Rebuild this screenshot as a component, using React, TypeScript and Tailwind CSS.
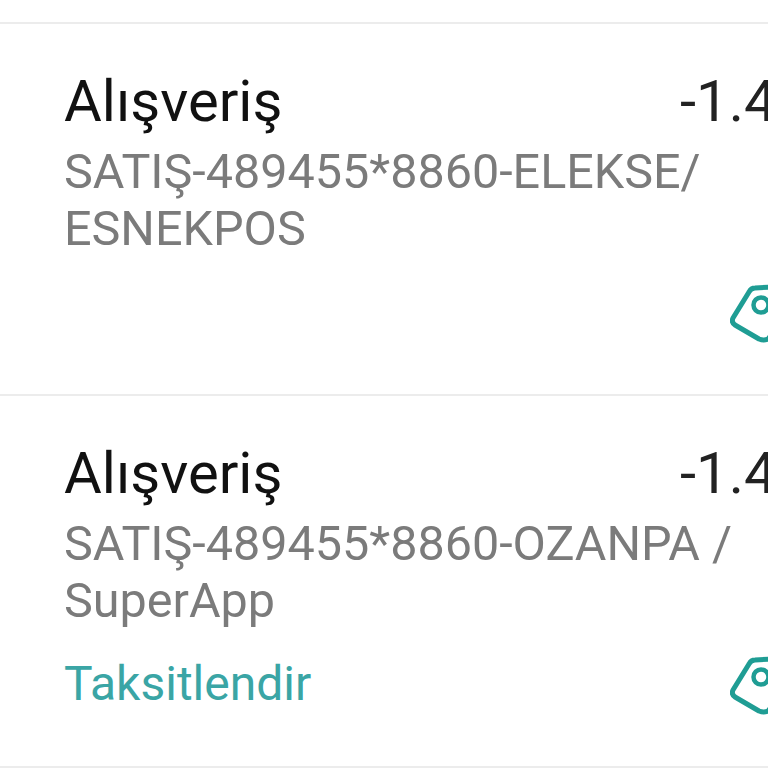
const TagIcon = () => (
  <svg className="h-[62px] w-[62px] shrink-0" viewBox="0 0 62 62" fill="none" stroke="#1f9d94" strokeWidth="5" strokeLinejoin="round" aria-hidden="true">
    <path d="M3 34 Q1 38 5 41 L29 55 Q34 57 38 55 L58 30 L55 2 L25 4 Q21 4 19 8 Z" />
    <circle cx="31" cy="21" r="7.5" strokeWidth="4.5" />
  </svg>
)

type RowProps = {
  title: string
  amount: string
  lines: string[]
  action?: string
}

function Row({ title, amount, lines, action }: RowProps) {
  return (
    <div className="h-[372px] w-[768px] overflow-hidden border-b-2 border-[#ececec] bg-white pl-[64px]">
      <div className="flex w-[900px] pt-[35px]">
        <div className="w-[616px] shrink-0">
          <div className="text-[58px] leading-[84px] text-[#111111]">{title}</div>
          {lines.map((line) => (
            <div key={line} className="whitespace-nowrap text-[48.5px] leading-[57px] text-[#7b7b7b]">{line}</div>
          ))}
        </div>
        <div className="shrink-0 whitespace-nowrap text-[58px] leading-[84px] text-[#222222]">{amount}</div>
      </div>
      <div className="flex w-[900px] items-start">
        <div className="mt-[26px] w-[666px] shrink-0 text-[48px] leading-[57px] text-[#3aa5a5]">{action}</div>
        <div className="mt-[27px] shrink-0"><TagIcon /></div>
      </div>
    </div>
  )
}

export default function App() {
  return (
    <div className="h-[768px] w-[768px] overflow-hidden bg-white font-['Roboto',sans-serif]">
      <div className="h-[24px] border-b-2 border-[#ececec]" />
      <Row title="Alışveriş" amount="-1.450,00" lines={['SATIŞ-489455*8860-ELEKSE/', 'ESNEKPOS']} />
      <Row title="Alışveriş" amount="-1.450,00" lines={['SATIŞ-489455*8860-OZANPA /', 'SuperApp']} action="Taksitlendir" />
    </div>
  )
}
